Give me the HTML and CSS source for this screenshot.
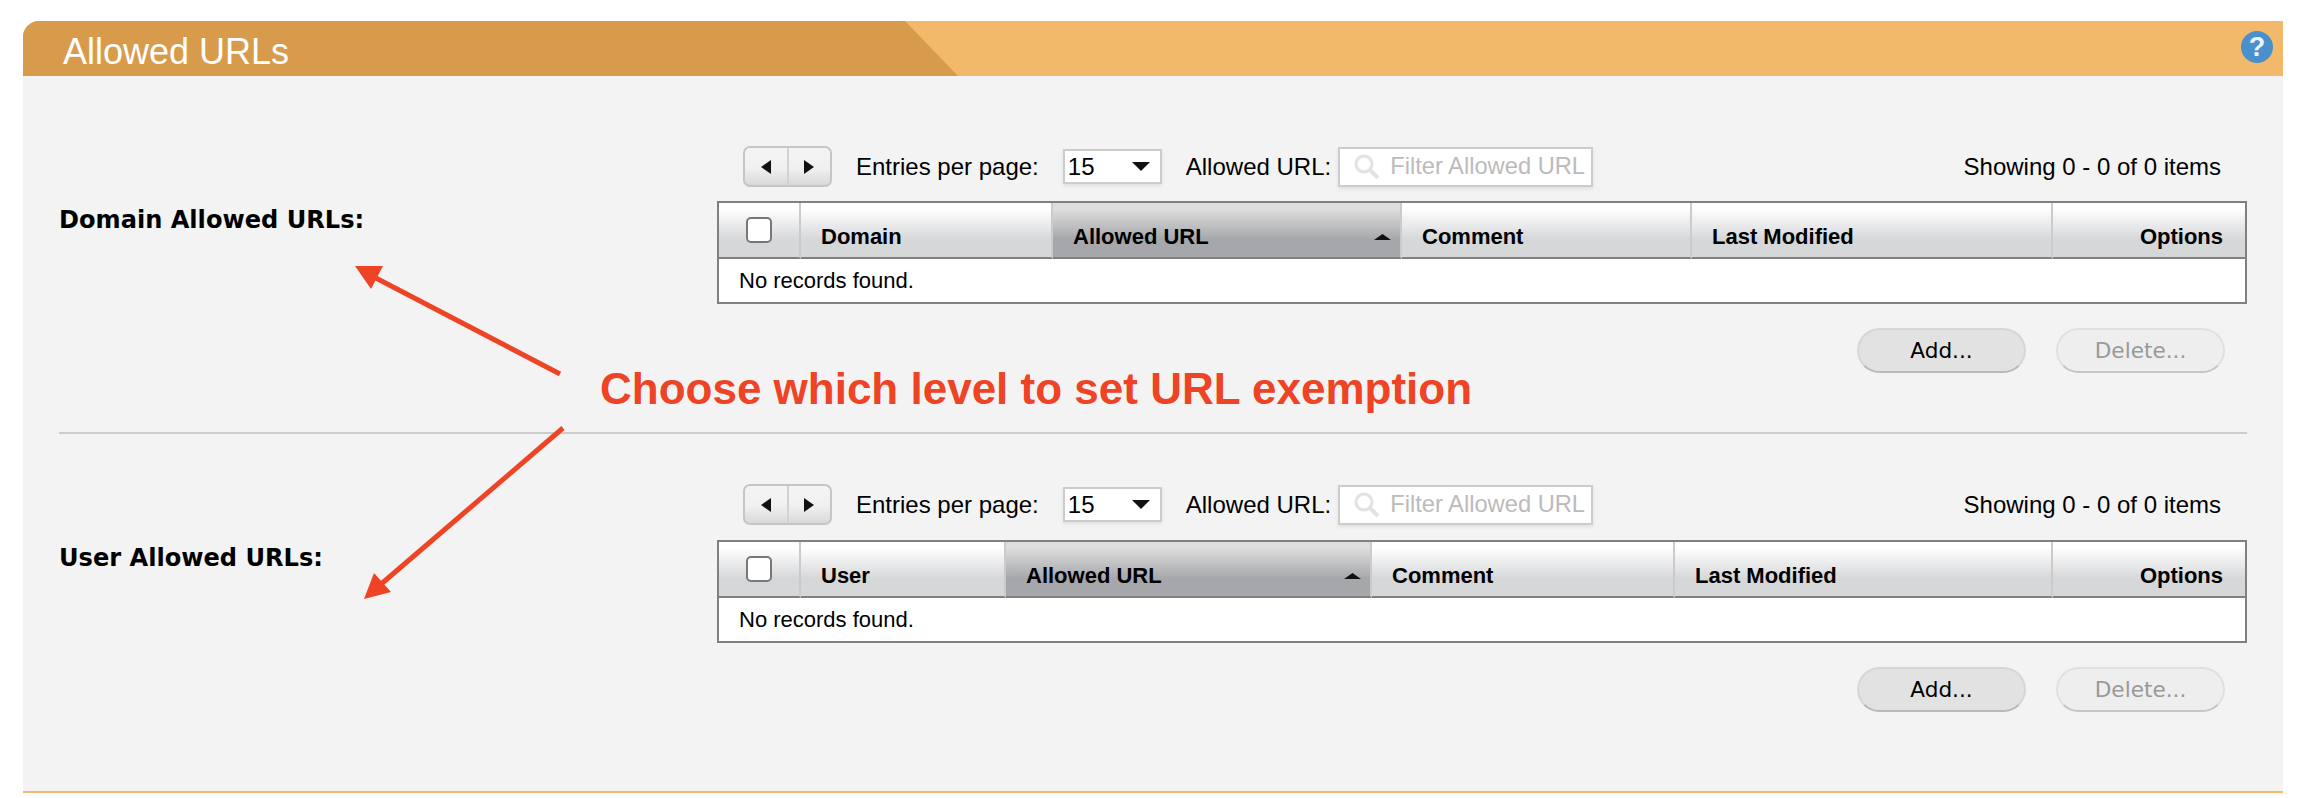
FILE: index.html
```html
<!DOCTYPE html>
<html lang="en">
<head>
<meta charset="utf-8">
<title>Allowed URLs</title>
<link rel="stylesheet" href="styles.css">
</head>
<body>
<div class="panel">
  <header class="panel-head">
    <h1 class="panel-title">Allowed URLs</h1>
    <span class="help">?</span>
  </header>
  <main class="panel-body">
    <section class="block block-first">
      <h2 class="block-label">Domain Allowed URLs:</h2>
      <div class="block-main">
        <div class="toolbar">
          <div class="pager">
            <span class="pager-btn"><svg width="10" height="14" viewBox="0 0 10 14"><polygon points="10,0 10,14 0,7" fill="#111"/></svg></span>
            <span class="pager-btn"><svg width="10" height="14" viewBox="0 0 10 14"><polygon points="0,0 0,14 10,7" fill="#111"/></svg></span>
          </div>
          <span class="tool-text">Entries per page:</span>
          <div class="select"><span>15</span><svg width="18" height="9" viewBox="0 0 18 9"><polygon points="0,0 18,0 9,9" fill="#111"/></svg></div>
          <span class="tool-text">Allowed URL:</span>
          <div class="filter">
            <svg class="filter-icon" width="27" height="25" viewBox="0 0 27 25"><circle cx="11" cy="10" r="8" fill="none" stroke="#e2e2e2" stroke-width="3"/><line x1="17" y1="16" x2="25" y2="24" stroke="#e2e2e2" stroke-width="4"/></svg>
            <span>Filter Allowed URL</span>
          </div>
          <span class="tool-text showing">Showing 0 - 0 of 0 items</span>
        </div>
        <table class="grid">
          <colgroup><col class="c-check"><col class="c-a1"><col class="c-a2"><col class="c-a3"><col class="c-a4"><col class="c-opt"></colgroup>
          <thead>
            <tr>
              <th class="cell-check"><span class="checkbox"></span></th>
              <th>Domain</th>
              <th class="sorted">Allowed URL<svg class="sort" width="17" height="6" viewBox="0 0 17 6"><polygon points="0,6 17,6 8.5,0" fill="#111"/></svg></th>
              <th>Comment</th>
              <th>Last Modified</th>
              <th class="cell-opt">Options</th>
            </tr>
          </thead>
          <tbody>
            <tr><td colspan="6">No records found.</td></tr>
          </tbody>
        </table>
        <div class="actions">
          <button class="btn" type="button">Add...</button>
          <button class="btn btn-off" type="button">Delete...</button>
        </div>
      </div>
    </section>
    <section class="block block-second">
      <h2 class="block-label">User Allowed URLs:</h2>
      <div class="block-main">
        <div class="toolbar">
          <div class="pager">
            <span class="pager-btn"><svg width="10" height="14" viewBox="0 0 10 14"><polygon points="10,0 10,14 0,7" fill="#111"/></svg></span>
            <span class="pager-btn"><svg width="10" height="14" viewBox="0 0 10 14"><polygon points="0,0 0,14 10,7" fill="#111"/></svg></span>
          </div>
          <span class="tool-text">Entries per page:</span>
          <div class="select"><span>15</span><svg width="18" height="9" viewBox="0 0 18 9"><polygon points="0,0 18,0 9,9" fill="#111"/></svg></div>
          <span class="tool-text">Allowed URL:</span>
          <div class="filter">
            <svg class="filter-icon" width="27" height="25" viewBox="0 0 27 25"><circle cx="11" cy="10" r="8" fill="none" stroke="#e2e2e2" stroke-width="3"/><line x1="17" y1="16" x2="25" y2="24" stroke="#e2e2e2" stroke-width="4"/></svg>
            <span>Filter Allowed URL</span>
          </div>
          <span class="tool-text showing">Showing 0 - 0 of 0 items</span>
        </div>
        <table class="grid">
          <colgroup><col class="c-check"><col class="c-b1"><col class="c-b2"><col class="c-b3"><col class="c-b4"><col class="c-opt"></colgroup>
          <thead>
            <tr>
              <th class="cell-check"><span class="checkbox"></span></th>
              <th>User</th>
              <th class="sorted">Allowed URL<svg class="sort" width="17" height="6" viewBox="0 0 17 6"><polygon points="0,6 17,6 8.5,0" fill="#111"/></svg></th>
              <th>Comment</th>
              <th>Last Modified</th>
              <th class="cell-opt">Options</th>
            </tr>
          </thead>
          <tbody>
            <tr><td colspan="6">No records found.</td></tr>
          </tbody>
        </table>
        <div class="actions">
          <button class="btn" type="button">Add...</button>
          <button class="btn btn-off" type="button">Delete...</button>
        </div>
      </div>
    </section>
  </main>
</div>
<svg class="arrows" width="2306" height="798" viewBox="0 0 2306 798">
  <line x1="560" y1="374" x2="372" y2="276" stroke="#ee4425" stroke-width="5"/>
  <polygon points="355,266 383,266 371,289" fill="#ee4425"/>
  <line x1="563" y1="428" x2="380" y2="585" stroke="#ee4425" stroke-width="5"/>
  <polygon points="364,599 374,573 391,592" fill="#ee4425"/>
</svg>
<p class="callout">Choose which level to set URL exemption</p>
</body>
</html>
```

FILE: styles.css
```css
* {
  box-sizing: border-box;
}

html,
body {
  margin: 0;
  padding: 0;
  background: #fff;
}

body {
  position: relative;
  width: 2306px;
  height: 798px;
  overflow: hidden;
  font-family: "Liberation Sans", Arial, sans-serif;
  color: #000;
}

.panel {
  width: 2260px;
  margin: 21px 0 0 23px;
}

.panel-head {
  display: flex;
  justify-content: space-between;
  align-items: flex-start;
  height: 55px;
  background: #f2b96a;
  border-top-left-radius: 16px;
  overflow: hidden;
}

.panel-title {
  margin: 0;
  width: 935px;
  height: 55px;
  padding: 8px 0 0 40px;
  background: #d89b4b;
  clip-path: polygon(0 0, 882px 0, 935px 55px, 0 55px);
  color: #fff;
  font-size: 36px;
  font-weight: 400;
  line-height: 46px;
}

.help {
  width: 32px;
  height: 32px;
  margin: 10px 10px 0 0;
  border-radius: 50%;
  background: #4a90cc;
  color: #eef4fa;
  font-size: 27px;
  font-weight: 700;
  line-height: 32px;
  text-align: center;
}

.panel-body {
  height: 717px;
  padding: 0 36px;
  background: #f3f3f3;
  border-bottom: 2px solid #f2b96a;
}

.block {
  display: flex;
  align-items: flex-start;
}

.block-first {
  height: 358px;
  padding-top: 70px;
  border-bottom: 2px solid #ccc;
}

.block-second {
  padding-top: 50px;
}

.block-second .toolbar {
  margin-bottom: 15px;
}

.block-label {
  flex: 0 0 658px;
  margin: 59px 0 0;
  font-family: "DejaVu Sans", Verdana, sans-serif;
  font-size: 24.1px;
  font-weight: 700;
  line-height: 30px;
}

.block-main {
  flex: 0 0 1530px;
}

.toolbar {
  display: flex;
  align-items: center;
  height: 41px;
  margin-bottom: 14px;
  padding: 0 26px;
}

.pager {
  display: flex;
  width: 89px;
  height: 41px;
  border: 2px solid #c6c6c6;
  border-radius: 7px;
  background: linear-gradient(#f4f4f4, #f0f0f0 55%, #d9d9d9);
}

.pager-btn {
  display: flex;
  flex: 1;
  align-items: center;
  justify-content: center;
}

.pager-btn + .pager-btn {
  border-left: 2px solid #d2d2d2;
}

.tool-text {
  font-size: 24px;
  line-height: 30px;
  white-space: nowrap;
}

.pager + .tool-text {
  margin-left: 24px;
}

.select {
  display: flex;
  align-items: center;
  justify-content: space-between;
  width: 99px;
  height: 35px;
  margin: 0 24px;
  padding: 0 10px 0 3px;
  background: #fff;
  border: 2px solid #ccc;
  box-shadow: 0 2px 4px rgba(0, 0, 0, 0.08);
  font-size: 24px;
}

.filter {
  display: flex;
  align-items: center;
  width: 255px;
  height: 40px;
  margin-left: 7px;
  padding-left: 13px;
  background: #fff;
  border: 2px solid #ccc;
  box-shadow: 0 2px 4px rgba(0, 0, 0, 0.08);
  color: #bbb;
  font-size: 23.7px;
  white-space: nowrap;
}

.filter-icon {
  flex: none;
  margin-right: 10px;
}

.showing {
  margin-left: auto;
}

.grid {
  width: 1530px;
  table-layout: fixed;
  border-collapse: separate;
  border-spacing: 0;
  border: 2px solid #808080;
  background: #fff;
}

.c-check { width: 82px; }
.c-a1 { width: 252px; }
.c-a2 { width: 349px; }
.c-a3 { width: 290px; }
.c-a4 { width: 361px; }
.c-b1 { width: 205px; }
.c-b2 { width: 366px; }
.c-b3 { width: 303px; }
.c-b4 { width: 378px; }
.c-opt { width: 192px; }

.grid th {
  position: relative;
  height: 56px;
  padding: 13px 0 0 20px;
  background: linear-gradient(#fff 10%, #d6d7d9 68%);
  border-right: 2px solid #cbcbcb;
  border-bottom: 2px solid #808080;
  font-size: 22px;
  font-weight: 700;
  line-height: 26px;
  text-align: left;
}

.grid th:last-child {
  border-right: 0;
}

.grid .sorted {
  background: linear-gradient(#dedede 10%, #a6a7ab 68%);
}

.sort {
  position: absolute;
  right: 9px;
  top: 31px;
}

.grid .cell-check {
  padding: 0 0 0 27px;
}

.checkbox {
  display: block;
  width: 26px;
  height: 26px;
  margin-top: -1px;
  background: #fff;
  border: 2px solid #777;
  border-radius: 5px;
}

.grid .cell-opt {
  padding-right: 22px;
  text-align: right;
}

.grid td {
  height: 43px;
  padding: 0 0 0 20px;
  font-size: 22px;
  line-height: 26px;
}

.actions {
  display: flex;
  justify-content: flex-end;
  gap: 30px;
  margin-top: 24px;
  padding-right: 22px;
}

.btn {
  width: 169px;
  height: 45px;
  padding: 0;
  background: #e2e2e2;
  border: 2px solid #d6d6d6;
  border-bottom-color: #b9b9b9;
  border-radius: 23px;
  color: #000;
  font-family: "DejaVu Sans", Verdana, sans-serif;
  font-size: 21.6px;
  line-height: 26px;
}

.btn-off {
  background: #eee;
  border-color: #e0e0e0;
  border-bottom-color: #c6c6c6;
  color: #999;
}

.arrows {
  position: absolute;
  top: 0;
  left: 0;
}

.callout {
  position: absolute;
  top: 363px;
  left: 600px;
  margin: 0;
  color: #ee4425;
  font-size: 44px;
  font-weight: 700;
  line-height: 52px;
  white-space: nowrap;
}
```
